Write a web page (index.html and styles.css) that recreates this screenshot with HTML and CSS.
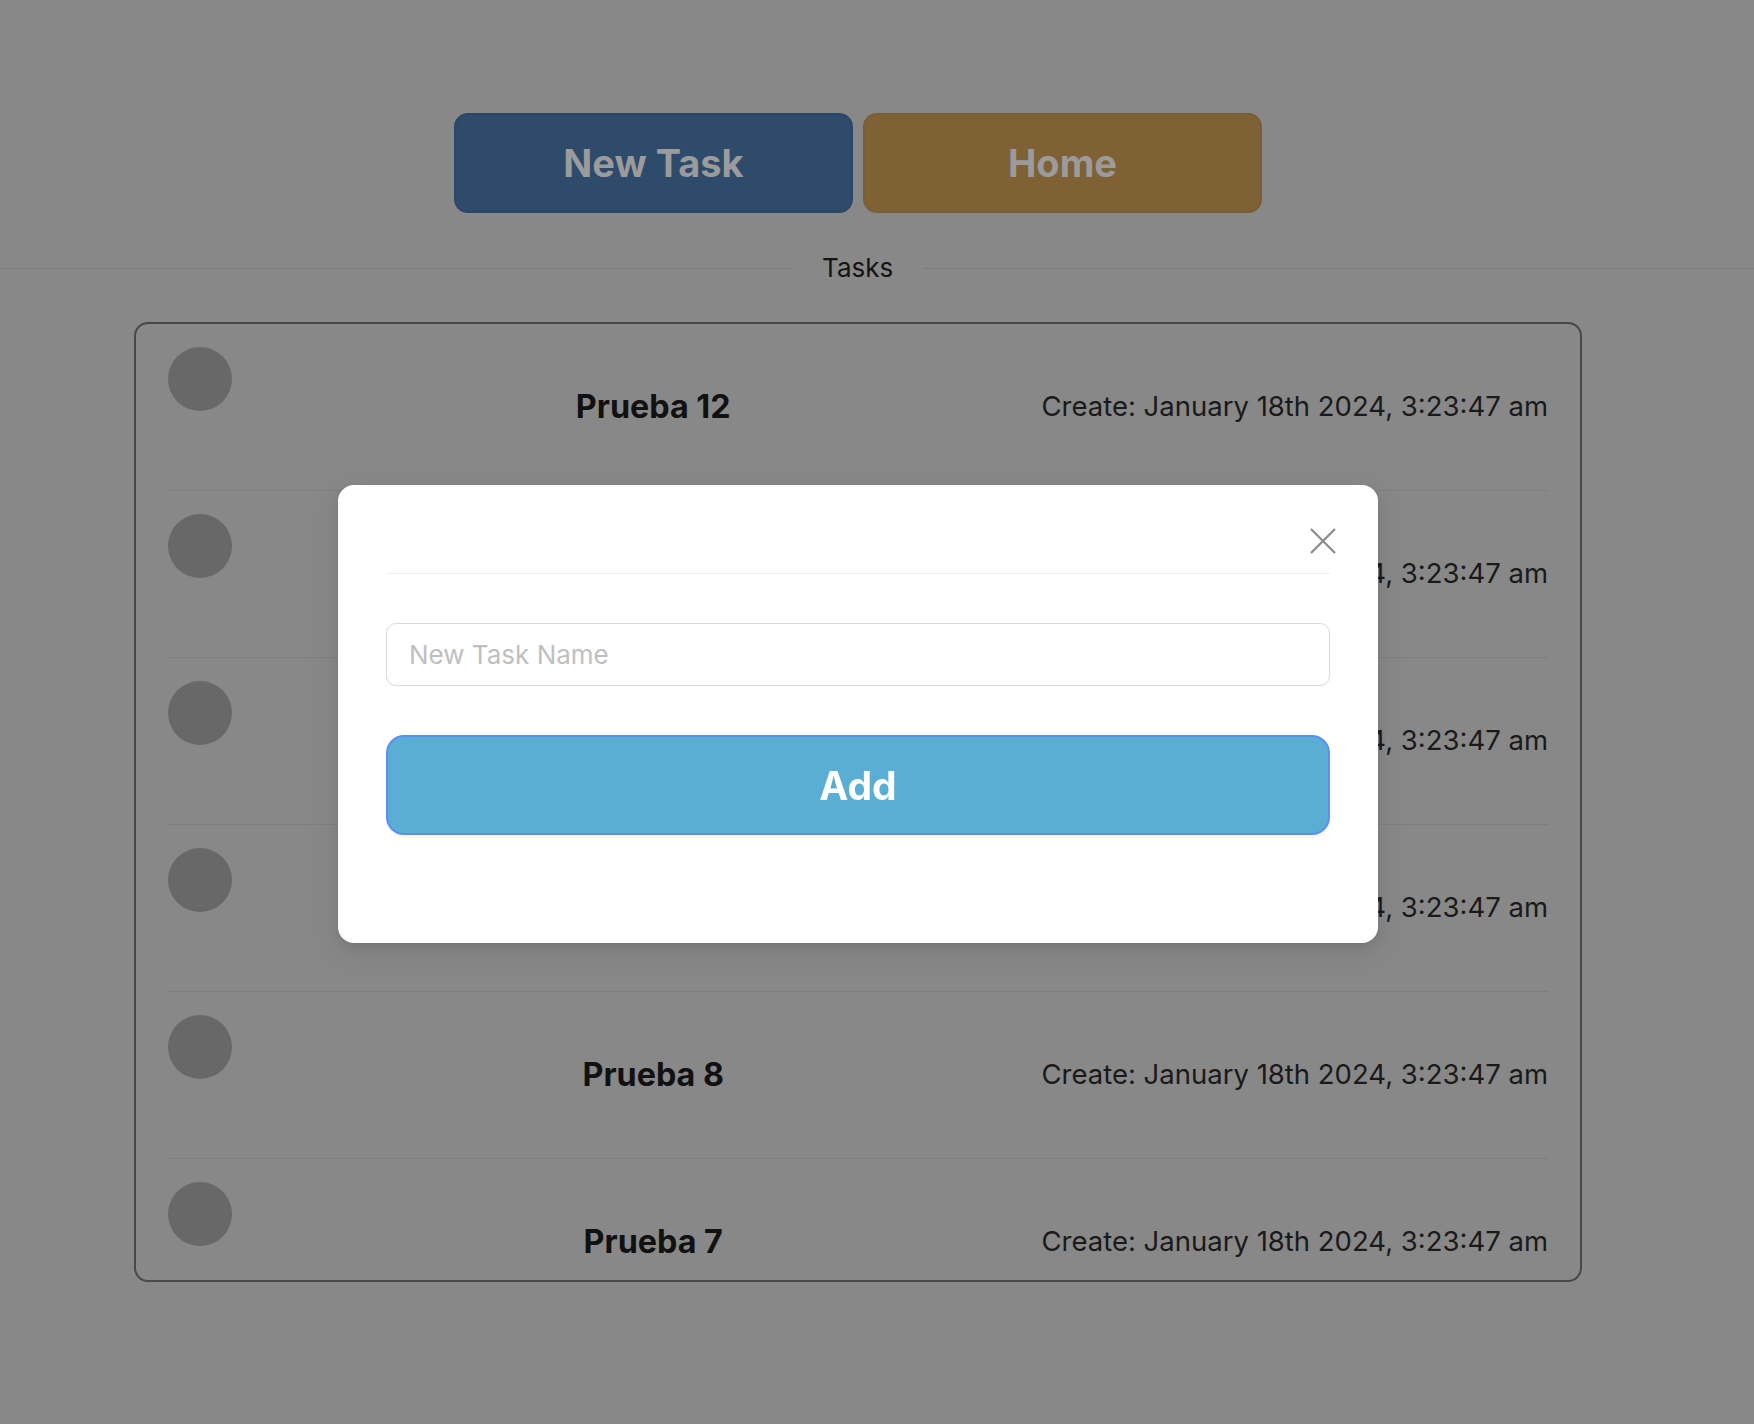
FILE: index.html
```html
<!DOCTYPE html>
<html lang="en">
<head>
<meta charset="utf-8">
<title>Tasks</title>
<link rel="stylesheet" href="styles.css">
</head>
<body>
<div class="app">
  <div class="page">
    <div class="actions">
      <button class="btn btn-new">New Task</button>
      <button class="btn btn-home">Home</button>
    </div>
  </div>
  <div class="divider">
    <span class="divider-line"></span>
    <span class="divider-text">Tasks</span>
    <span class="divider-line"></span>
  </div>
  <div class="page">
    <div class="task-card">
      <div class="task-row">
        <span class="dot"></span>
        <span class="task-name">Prueba 12</span>
        <span class="task-date">Create: January 18th 2024, 3:23:47 am</span>
      </div>
      <div class="task-row">
        <span class="dot"></span>
        <span class="task-name">Prueba 11</span>
        <span class="task-date">Create: January 18th 2024, 3:23:47 am</span>
      </div>
      <div class="task-row">
        <span class="dot"></span>
        <span class="task-name">Prueba 10</span>
        <span class="task-date">Create: January 18th 2024, 3:23:47 am</span>
      </div>
      <div class="task-row">
        <span class="dot"></span>
        <span class="task-name">Prueba 9</span>
        <span class="task-date">Create: January 18th 2024, 3:23:47 am</span>
      </div>
      <div class="task-row">
        <span class="dot"></span>
        <span class="task-name">Prueba 8</span>
        <span class="task-date">Create: January 18th 2024, 3:23:47 am</span>
      </div>
      <div class="task-row">
        <span class="dot"></span>
        <span class="task-name">Prueba 7</span>
        <span class="task-date">Create: January 18th 2024, 3:23:47 am</span>
      </div>
    </div>
  </div>
</div>

<div class="modal">
  <div class="modal-header">
    <button class="modal-close" aria-label="Close">
      <svg width="26" height="26" viewBox="0 0 26 26"><path d="M1 1 L25 25 M25 1 L1 25" stroke="#8a8a8a" stroke-width="2.2" fill="none"/></svg>
    </button>
  </div>
  <div class="modal-body">
    <input class="task-input" type="text" placeholder="New Task Name">
    <button class="btn-add">Add</button>
  </div>
</div>
</body>
</html>
```

FILE: styles.css
```css
* { box-sizing: border-box; }

html, body {
  margin: 0;
  padding: 0;
  background: #888888;
  font-family: Inter, "Noto Sans", "Liberation Sans", sans-serif;
  color: #161616;
}

.app {
  min-height: 1424px;
  padding-top: 113px;
}

.page {
  width: 1716px;
  display: flex;
  justify-content: center;
}

.actions {
  display: flex;
  gap: 10px;
}

.btn {
  width: 399px;
  height: 100px;
  border-radius: 14px;
  font-family: Inter, "Noto Sans", sans-serif;
  font-weight: 700;
  font-size: 38px;
  color: #9b9b9b;
  cursor: pointer;
  padding: 0;
}

.btn-new {
  background: #2e4b6b;
  border: 2px solid #2b4767;
}

.btn-home {
  background: #7e6135;
  border: 2px solid #7a5e33;
}

.divider {
  display: grid;
  grid-template-columns: 792px auto 1fr;
  align-items: center;
  column-gap: 30px;
  margin-top: 39px;
}

.divider-line {
  height: 1px;
  background: #7c7c7c;
}

.divider-text {
  font-size: 26px;
  line-height: 32px;
  color: #141414;
}

.task-card {
  margin-top: 38px;
  width: 1448px;
  height: 960px;
  border: 2px solid #484848;
  border-radius: 14px;
  padding: 0 32px;
  overflow: hidden;
}

.task-row {
  height: 167px;
  border-bottom: 1px solid #7e7e7e;
  display: grid;
  grid-template-columns: 64px 1fr auto;
  align-items: center;
  padding-bottom: 2px;
}

.dot {
  width: 64px;
  height: 64px;
  border-radius: 50%;
  background: #686868;
  align-self: start;
  margin-top: 23px;
}

.task-name {
  text-align: center;
  padding-left: 33px;
  font-weight: 700;
  font-size: 32.3px;
  color: #111111;
}

.task-date {
  font-size: 27.5px;
  color: #1a1a1a;
}

.modal {
  position: fixed;
  left: 338px;
  top: 485px;
  width: 1040px;
  height: 458px;
  background: #ffffff;
  border-radius: 16px;
  padding: 0 48px;
  box-shadow: 0 6px 16px 0 rgba(0,0,0,0.08), 0 3px 6px -4px rgba(0,0,0,0.12), 0 9px 28px 8px rgba(0,0,0,0.05);
}

.modal-header {
  height: 89px;
  border-bottom: 1px solid #f0f0f0;
  position: relative;
}

.modal-close {
  position: absolute;
  right: -7px;
  top: 42px;
  width: 28px;
  height: 28px;
  padding: 1px;
  border: none;
  background: transparent;
  cursor: pointer;
  display: flex;
  align-items: center;
  justify-content: center;
}

.modal-body {
  padding-top: 49px;
  display: flex;
  flex-direction: column;
  gap: 49px;
}

.task-input {
  height: 63px;
  width: 100%;
  border: 1.5px solid #d9d9d9;
  border-radius: 10px;
  padding: 0 22px;
  font-family: Inter, "Noto Sans", sans-serif;
  font-size: 26px;
  color: #333;
  outline: none;
}

.task-input::placeholder {
  color: #bfbfbf;
}

.btn-add {
  height: 100px;
  width: 100%;
  background: #5aadd3;
  border: 2px solid #5b8ff6;
  border-radius: 18px;
  font-family: Inter, "Noto Sans", sans-serif;
  font-weight: 700;
  font-size: 39px;
  color: #ffffff;
  box-shadow: 0 3px 0 rgba(0,0,0,0.03);
  cursor: pointer;
}
```
